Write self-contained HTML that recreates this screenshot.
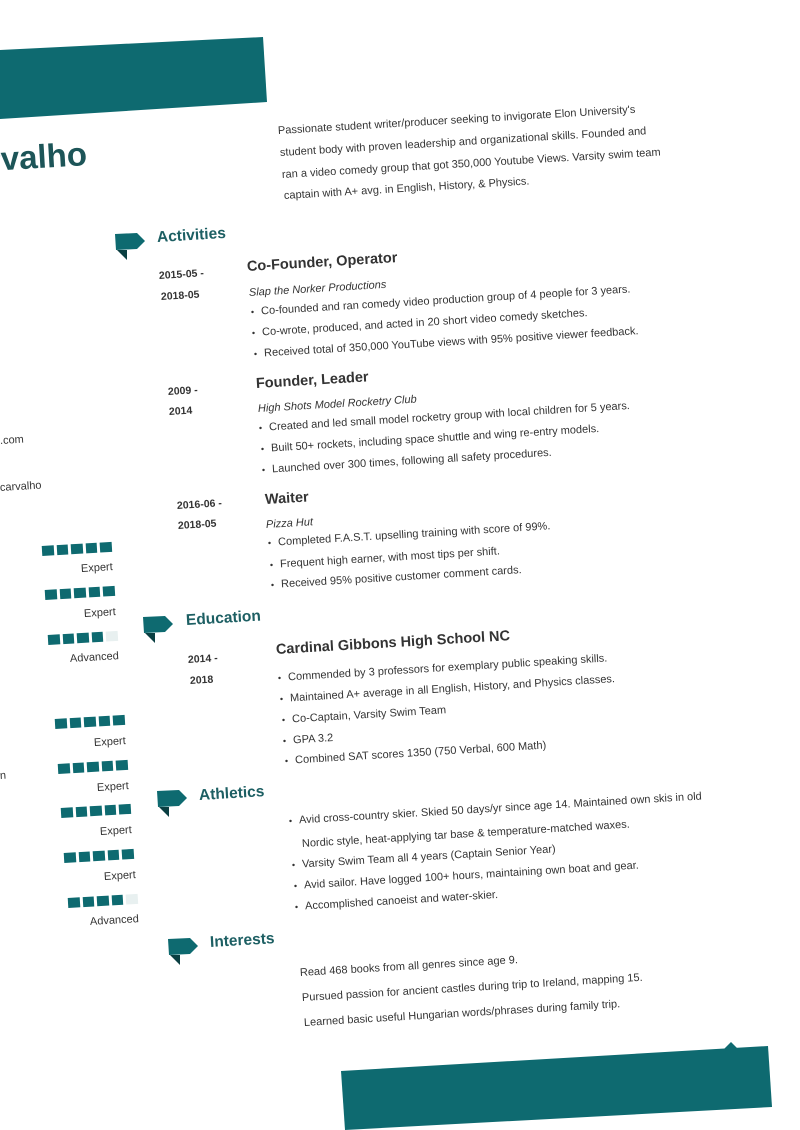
<!DOCTYPE html>
<html><head><meta charset="utf-8"><style>
html,body{margin:0;padding:0;width:800px;height:1130px;overflow:hidden;background:#fff;font-family:"Liberation Sans",sans-serif;}
.r{position:absolute;transform-origin:0 50%;transform:rotate(-3.4deg);white-space:nowrap;color:#333;font-size:11px;line-height:13px}
.d{font-weight:bold;font-size:10.5px;color:#333}
.h{font-weight:bold;font-size:14.5px;color:#333}
.i{font-style:italic;color:#333}
.s{font-weight:bold;font-size:15.5px;color:#1d5f63}
.b:before{content:"•";margin-right:7px;font-size:9px}
.sq{position:absolute;display:flex;gap:3px;transform-origin:0 50%;transform:rotate(-3.4deg)}
.sq i{display:block;width:11.5px;height:9.5px;background:#0e6a70}
.sq i.e{background:#e8f0f0}
</style></head><body>
<svg width="800" height="1130" style="position:absolute;left:0;top:0">
<polygon points="0,50 263,37 267,102 0,119" fill="#0e6a70"/>
<polygon points="341,1071 768,1046 772,1107 345,1130" fill="#0e6a70"/>
<polygon points="724,1049 731,1042 738,1049" fill="#0e6a70"/>
<g fill="#0e6a70">
<g transform="translate(115,232)"><polygon points="0,2 22,1 30,9 22,17 1,18"/><polygon points="2,18 12,18 12,28" fill="#0a3f42"/></g>
<g transform="translate(143,615)"><polygon points="0,2 22,1 30,9 22,17 1,18"/><polygon points="2,18 12,18 12,28" fill="#0a3f42"/></g>
<g transform="translate(157,789)"><polygon points="0,2 22,1 30,9 22,17 1,18"/><polygon points="2,18 12,18 12,28" fill="#0a3f42"/></g>
<g transform="translate(168,937)"><polygon points="0,2 22,1 30,9 22,17 1,18"/><polygon points="2,18 12,18 12,28" fill="#0a3f42"/></g>
</g>
</svg>
<div class="r" style="left:-12px;top:142px;font-size:33px;line-height:36px;font-weight:bold;color:#1d5558">rvalho</div>
<div class="r" style="left:278px;top:125px">Passionate student writer/producer seeking to invigorate Elon University's</div>
<div class="r" style="left:280px;top:147px">student body with proven leadership and organizational skills. Founded and</div>
<div class="r" style="left:282px;top:169px">ran a video comedy group that got 350,000 Youtube Views. Varsity swim team</div>
<div class="r" style="left:284px;top:190px">captain with A+ avg. in English, History, &amp; Physics.</div>

<div class="r s" style="left:157px;top:231px">Activities</div>
<div class="r d" style="left:159px;top:270px">2015-05 -</div>
<div class="r d" style="left:161px;top:291px">2018-05</div>
<div class="r h" style="left:247px;top:261px">Co-Founder, Operator</div>
<div class="r i" style="left:249px;top:287px">Slap the Norker Productions</div>
<div class="r b" style="left:251px;top:306px">Co-founded and ran comedy video production group of 4 people for 3 years.</div>
<div class="r b" style="left:252px;top:327px">Co-wrote, produced, and acted in 20 short video comedy sketches.</div>
<div class="r b" style="left:254px;top:348px">Received total of 350,000 YouTube views with 95% positive viewer feedback.</div>

<div class="r d" style="left:168px;top:386px">2009 -</div>
<div class="r d" style="left:169px;top:406px">2014</div>
<div class="r h" style="left:256px;top:378px">Founder, Leader</div>
<div class="r i" style="left:258px;top:403px">High Shots Model Rocketry Club</div>
<div class="r b" style="left:259px;top:422px">Created and led small model rocketry group with local children for 5 years.</div>
<div class="r b" style="left:261px;top:443px">Built 50+ rockets, including space shuttle and wing re-entry models.</div>
<div class="r b" style="left:262px;top:464px">Launched over 300 times, following all safety procedures.</div>

<div class="r d" style="left:177px;top:500px">2016-06 -</div>
<div class="r d" style="left:178px;top:520px">2018-05</div>
<div class="r h" style="left:265px;top:494px">Waiter</div>
<div class="r i" style="left:266px;top:519px">Pizza Hut</div>
<div class="r b" style="left:268px;top:537px">Completed F.A.S.T. upselling training with score of 99%.</div>
<div class="r b" style="left:270px;top:559px">Frequent high earner, with most tips per shift.</div>
<div class="r b" style="left:271px;top:579px">Received 95% positive customer comment cards.</div>

<div class="r s" style="left:186px;top:614px">Education</div>
<div class="r d" style="left:188px;top:654px">2014 -</div>
<div class="r d" style="left:190px;top:675px">2018</div>
<div class="r h" style="left:276px;top:644px">Cardinal Gibbons High School NC</div>
<div class="r b" style="left:278px;top:672px">Commended by 3 professors for exemplary public speaking skills.</div>
<div class="r b" style="left:280px;top:693px">Maintained A+ average in all English, History, and Physics classes.</div>
<div class="r b" style="left:282px;top:714px">Co-Captain, Varsity Swim Team</div>
<div class="r b" style="left:283px;top:735px">GPA 3.2</div>
<div class="r b" style="left:285px;top:755px">Combined SAT scores 1350 (750 Verbal, 600 Math)</div>

<div class="r s" style="left:199px;top:789px">Athletics</div>
<div class="r b" style="left:289px;top:815px">Avid cross-country skier. Skied 50 days/yr since age 14. Maintained own skis in old</div>
<div class="r" style="left:302px;top:838px">Nordic style, heat-applying tar base &amp; temperature-matched waxes.</div>
<div class="r b" style="left:292px;top:859px">Varsity Swim Team all 4 years (Captain Senior Year)</div>
<div class="r b" style="left:294px;top:880px">Avid sailor. Have logged 100+ hours, maintaining own boat and gear.</div>
<div class="r b" style="left:295px;top:901px">Accomplished canoeist and water-skier.</div>

<div class="r s" style="left:210px;top:936px">Interests</div>
<div class="r" style="left:300px;top:967px">Read 468 books from all genres since age 9.</div>
<div class="r" style="left:302px;top:992px">Pursued passion for ancient castles during trip to Ireland, mapping 15.</div>
<div class="r" style="left:304px;top:1017px">Learned basic useful Hungarian words/phrases during family trip.</div>

<div class="r" style="left:0;top:435px">.com</div>
<div class="r" style="left:0;top:482px">carvalho</div>
<div class="r" style="left:0;top:770px">n</div>

<div class="sq" style="left:42px;top:546px"><i></i><i></i><i></i><i></i><i></i></div>
<div class="r" style="left:81px;top:563px">Expert</div>
<div class="sq" style="left:45px;top:590px"><i></i><i></i><i></i><i></i><i></i></div>
<div class="r" style="left:84px;top:608px">Expert</div>
<div class="sq" style="left:48px;top:635px"><i></i><i></i><i></i><i></i><i class="e"></i></div>
<div class="r" style="left:70px;top:653px">Advanced</div>
<div class="sq" style="left:55px;top:719px"><i></i><i></i><i></i><i></i><i></i></div>
<div class="r" style="left:94px;top:737px">Expert</div>
<div class="sq" style="left:58px;top:764px"><i></i><i></i><i></i><i></i><i></i></div>
<div class="r" style="left:97px;top:782px">Expert</div>
<div class="sq" style="left:61px;top:808px"><i></i><i></i><i></i><i></i><i></i></div>
<div class="r" style="left:100px;top:826px">Expert</div>
<div class="sq" style="left:64px;top:853px"><i></i><i></i><i></i><i></i><i></i></div>
<div class="r" style="left:104px;top:871px">Expert</div>
<div class="sq" style="left:68px;top:898px"><i></i><i></i><i></i><i></i><i class="e"></i></div>
<div class="r" style="left:90px;top:916px">Advanced</div>
</body></html>
